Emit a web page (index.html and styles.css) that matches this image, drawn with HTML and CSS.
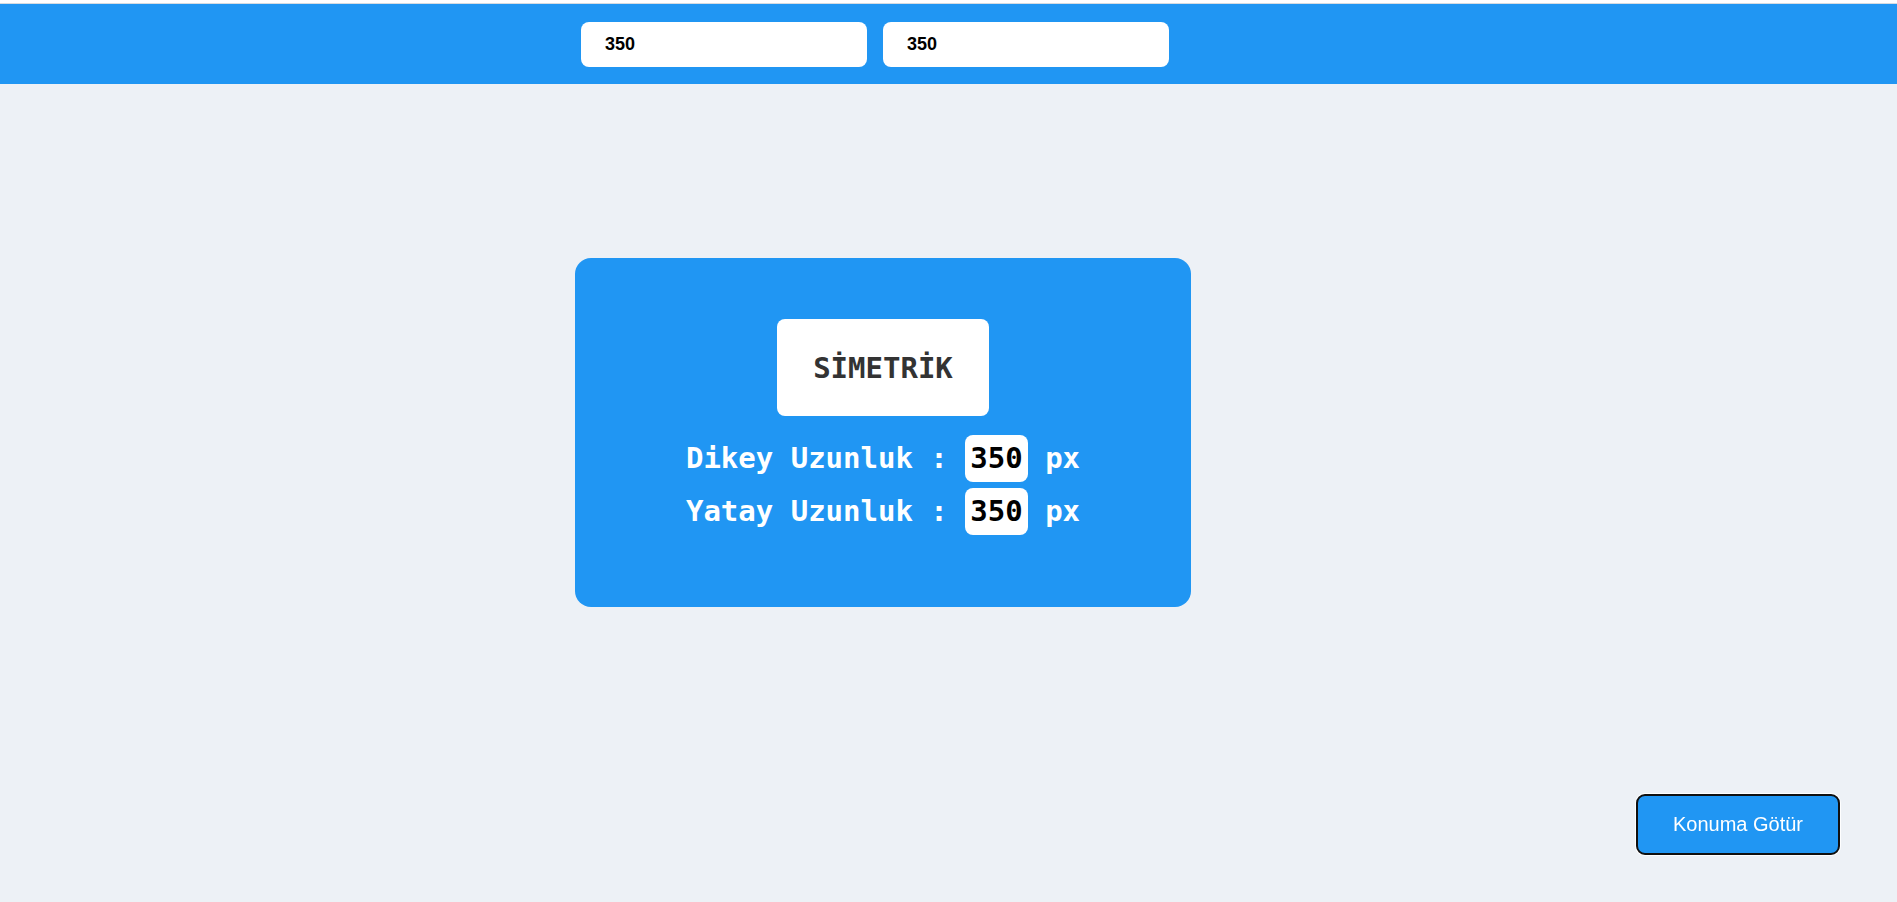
FILE: index.html
```html
<!DOCTYPE html>
<html lang="tr">
<head>
  <meta charset="utf-8">
  <meta name="viewport" content="width=device-width, initial-scale=1">
  <title>Simetrik</title>
  <link rel="stylesheet" href="styles.css">
</head>
<body>
  <header class="toolbar">
    <input class="toolbar-input" type="text" inputmode="numeric" value="350" aria-label="Dikey uzunluk">
    <input class="toolbar-input" type="text" inputmode="numeric" value="350" aria-label="Yatay uzunluk">
  </header>
  <main class="stage">
    <section class="card">
      <h1 class="card-title">SİMETRİK</h1>
      <div class="measures">
        <p class="measure">Dikey Uzunluk : <span class="measure-value">350</span> px</p>
        <p class="measure">Yatay Uzunluk : <span class="measure-value">350</span> px</p>
      </div>
    </section>
  </main>
  <button class="goto-button" type="button">Konuma Götür</button>
</body>
</html>
```

FILE: styles.css
```css
* {
  box-sizing: border-box;
  margin: 0;
}

body {
  min-height: 100vh;
  background: #edf1f6;
  border-top: 3px solid #ffffff;
  font-family: "Liberation Sans", Arial, sans-serif;
}

.toolbar {
  display: flex;
  justify-content: center;
  gap: 16px;
  padding: 18px 147px 17px 0;
  background: #2096f3;
  border-top: 1px solid #d5dbe1;
}

.toolbar-input {
  width: 286px;
  height: 45px;
  padding: 0 24px;
  border: 0;
  border-radius: 8px;
  background: #ffffff;
  color: #000000;
  font: bold 18px "Liberation Sans", Arial, sans-serif;
}

.stage {
  display: flex;
  justify-content: center;
  padding: 174px 131px 48px 0;
}

.card {
  display: flex;
  flex-direction: column;
  align-items: center;
  gap: 19px;
  padding: 61px 111px 72px;
  border-radius: 16px;
  background: #2096f3;
  color: #ffffff;
  font-family: "DejaVu Sans Mono", monospace;
  font-size: 29px;
  font-weight: bold;
}

.card-title {
  padding: 25px 36px 23px;
  border-radius: 8px;
  background: #ffffff;
  color: #333333;
  font-size: 29px;
  line-height: 49px;
}

.measures {
  display: grid;
  gap: 6px;
}

.measure {
  line-height: 47px;
  white-space: nowrap;
}

.measure-value {
  display: inline-block;
  padding: 0 5px;
  border-radius: 8px;
  background: #ffffff;
  color: #000000;
}

.goto-button {
  position: fixed;
  right: 57px;
  bottom: 47px;
  padding: 16px 35px 17px;
  border: 2px solid #101010;
  border-radius: 9px;
  box-shadow: 0 0 0 1px #ffffff;
  background: #2096f3;
  color: #ffffff;
  font: 20px/24px "Liberation Sans", Arial, sans-serif;
}
```
